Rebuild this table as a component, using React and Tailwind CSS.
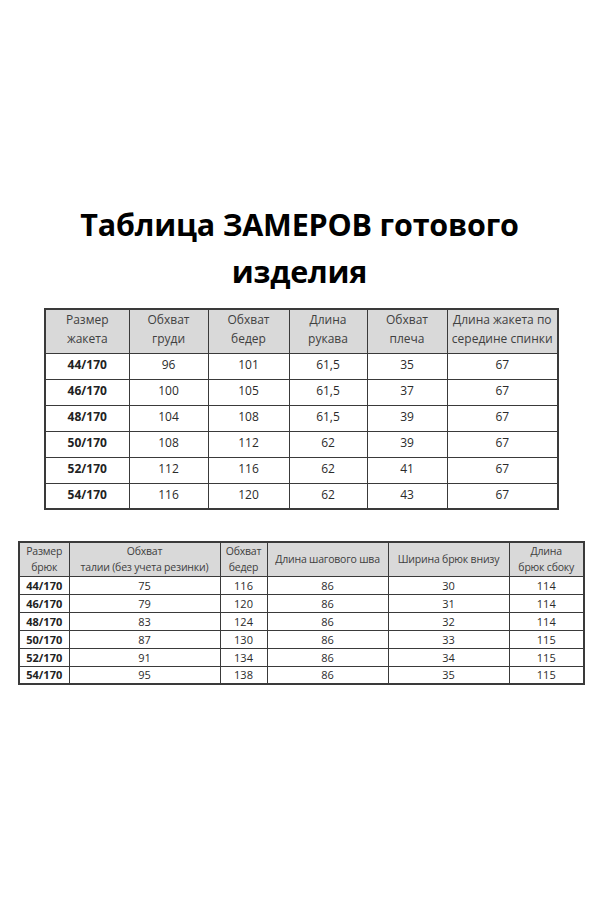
const jacket = [
  ["44/170", "96", "101", "61,5", "35", "67"],
  ["46/170", "100", "105", "61,5", "37", "67"],
  ["48/170", "104", "108", "61,5", "39", "67"],
  ["50/170", "108", "112", "62", "39", "67"],
  ["52/170", "112", "116", "62", "41", "67"],
  ["54/170", "116", "120", "62", "43", "67"],
];

const pants = [
  ["44/170", "75", "116", "86", "30", "114"],
  ["46/170", "79", "120", "86", "31", "114"],
  ["48/170", "83", "124", "86", "32", "114"],
  ["50/170", "87", "130", "86", "33", "115"],
  ["52/170", "91", "134", "86", "34", "115"],
  ["54/170", "95", "138", "86", "35", "115"],
];

const jacketCols = [84, 79, 81, 78, 80, 111];
const pantsCols = [50, 151, 47, 121, 121, 75];

const jacketHead = [
  ["Размер", "жакета"],
  ["Обхват", "груди"],
  ["Обхват", "бедер"],
  ["Длина", "рукава"],
  ["Обхват", "плеча"],
  ["Длина жакета по", "середине спинки"],
];

const pantsHead = [
  ["Размер", "брюк"],
  ["Обхват", "талии (без учета резинки)"],
  ["Обхват", "бедер"],
  ["Длина шагового шва"],
  ["Ширина брюк внизу"],
  ["Длина", "брюк сбоку"],
];

export default function App() {
  return (
    <div className="w-[599px] h-[899px] bg-white font-['Open_Sans',sans-serif] text-[#2b2b2b]">
      <div className="pt-[201px] text-center text-[30.5px] leading-[47px] font-bold text-black tracking-[-0.2px]">
        <div>Таблица ЗАМЕРОВ готового</div>
        <div>изделия</div>
      </div>

      <table className="mt-[13px] ml-[44px] border-collapse border-2 border-[#3a3a3a] table-fixed w-[513px] text-[12px]">
        <colgroup>
          {jacketCols.map((w, i) => (
            <col key={i} style={{ width: w }} />
          ))}
        </colgroup>
        <thead>
          <tr className="h-[44px] bg-[#d9d9d9]">
            {jacketHead.map((h, i) => (
              <th
                key={i}
                className="border border-[#3a3a3a] font-normal leading-[19px] align-middle pb-[4px] text-[#404040]"
              >
                {h.map((l, j) => (
                  <div key={j}>{l}</div>
                ))}
              </th>
            ))}
          </tr>
        </thead>
        <tbody>
          {jacket.map((r, i) => (
            <tr key={i} className="h-[26px]">
              {r.map((c, j) => (
                <td
                  key={j}
                  className={`border border-[#3a3a3a] text-center align-top pt-[3px] leading-[16px] ${
                    j === 0 ? "font-bold text-[#222]" : ""
                  }`}
                >
                  {c}
                </td>
              ))}
            </tr>
          ))}
        </tbody>
      </table>

      <table className="mt-[31px] ml-[18px] border-collapse border-2 border-[#3a3a3a] table-fixed w-[565px] text-[11px]">
        <colgroup>
          {pantsCols.map((w, i) => (
            <col key={i} style={{ width: w }} />
          ))}
        </colgroup>
        <thead>
          <tr className="h-[34px] bg-[#d9d9d9]">
            {pantsHead.map((h, i) => (
              <th
                key={i}
                className="border border-[#3a3a3a] font-normal text-[10.5px] leading-[16px] align-middle text-[#404040] whitespace-nowrap tracking-[-0.2px]"
              >
                {h.map((l, j) => (
                  <div key={j}>{l}</div>
                ))}
              </th>
            ))}
          </tr>
        </thead>
        <tbody>
          {pants.map((r, i) => (
            <tr key={i} className="h-[18px]">
              {r.map((c, j) => (
                <td
                  key={j}
                  className={`border border-[#3a3a3a] text-center leading-[15px] p-0 ${
                    j === 0 ? "font-bold text-[#222]" : ""
                  }`}
                >
                  {c}
                </td>
              ))}
            </tr>
          ))}
        </tbody>
      </table>
    </div>
  );
}
